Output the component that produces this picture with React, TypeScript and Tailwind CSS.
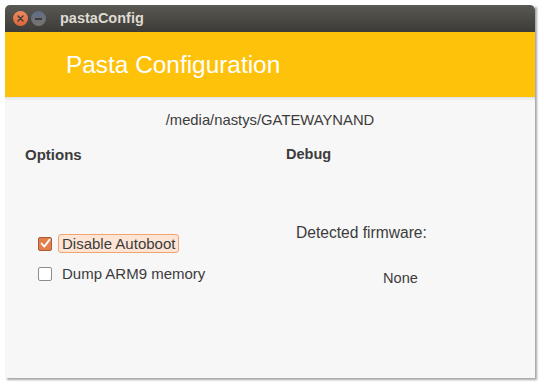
import React from "react";

function Check({ checked }: { checked: boolean }) {
  if (checked) {
    return (
      <span className="flex h-[14px] w-[14px] items-center justify-center rounded-[2px] border border-[#b0582f] bg-[#e0804f]">
        <svg width="11" height="11" viewBox="0 0 11 11">
          <path d="M1.5 5.5 L4.3 8.6 L9.6 1.6" fill="none" stroke="#ffffff" strokeWidth="1.8" strokeLinecap="round" strokeLinejoin="round" />
        </svg>
      </span>
    );
  }
  return <span className="h-[14px] w-[14px] rounded-[2px] border border-[#8c8c8c] bg-white" />;
}

export default function App() {
  return (
    <div className="h-[387px] w-[544px] overflow-hidden bg-white pl-[5px] pt-[5px] font-['Liberation_Sans',sans-serif] text-[15px] leading-[17px] text-[#3c3c3c]">
      <div className="flex h-[373px] w-[530px] flex-col bg-[#f7f7f7] shadow-[2px_2px_2px_rgba(0,0,0,0.35)]">
        {/* title bar */}
        <div className="flex h-[27px] items-center rounded-t-[5px] bg-gradient-to-b from-[#5a5852] to-[#3c3b37] pl-[8px]">
          <span className="flex h-[15px] w-[15px] items-center justify-center rounded-full bg-gradient-to-b from-[#f08a60] to-[#d9643a]">
            <svg width="7" height="7" viewBox="0 0 7 7">
              <path d="M1 1 L6 6 M6 1 L1 6" stroke="#3c3b37" strokeWidth="1.4" strokeLinecap="round" />
            </svg>
          </span>
          <span className="ml-[3px] flex h-[15px] w-[15px] items-center justify-center rounded-full bg-gradient-to-b from-[#5c6c86] to-[#7a746c]">
            <span className="h-[2px] w-[7px] bg-[#3c3b37]" />
          </span>
          <span className="ml-[14px] text-[14.5px] font-bold text-[#dfdbd2]">pastaConfig</span>
        </div>

        {/* header */}
        <div className="flex h-[65px] items-center bg-[#fec20b] pl-[61px]">
          <span className="text-[24.4px] leading-[28px] text-white">Pasta Configuration</span>
        </div>
        <div className="h-[3px] border-t border-dotted border-[#d8d8d8] bg-[#ededed]" />

        {/* content */}
        <div className="pt-[12px] text-center text-[14.8px]">/media/nastys/GATEWAYNAND</div>

        <div className="mt-[17px] flex">
          <div className="w-[281px] pl-[20px]">
            <div className="text-[15px] font-bold">Options</div>
            <div className="mt-[71px] flex items-center pl-[13px]">
              <Check checked />
              <span className="ml-[6px] flex h-[19px] items-center rounded-[3px] border border-[#f0a474] bg-[#fde5d6] px-[3px]">
                Disable Autoboot
              </span>
            </div>
            <div className="mt-[11px] flex h-[19px] items-center pl-[13px]">
              <Check checked={false} />
              <span className="ml-[10px]">Dump ARM9 memory</span>
            </div>
          </div>
          <div className="flex-1">
            <div className="text-[14.5px] font-bold">Debug</div>
            <div className="mt-[61px] pl-[10px] text-[15.6px]">Detected firmware:</div>
            <div className="mt-[29px] pl-[97px] text-[14.6px]">None</div>
          </div>
        </div>
      </div>
    </div>
  );
}
